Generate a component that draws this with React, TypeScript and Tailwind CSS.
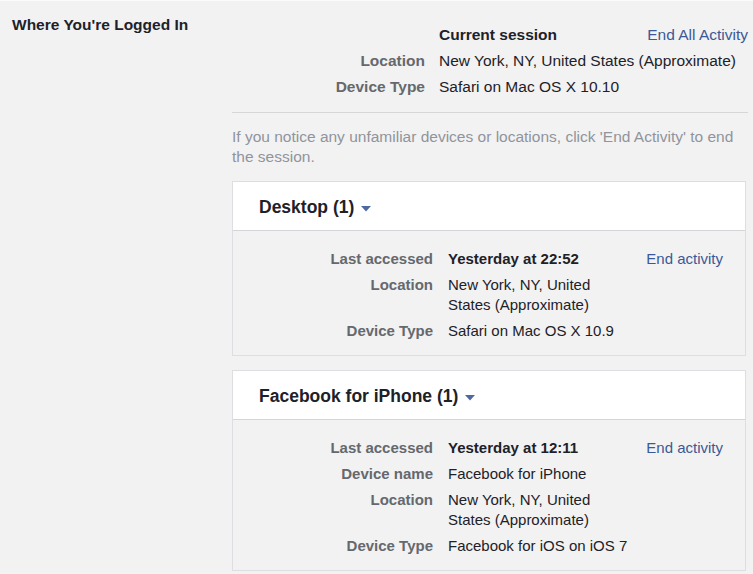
import type { ReactNode } from 'react'

type Row = { label: string; value: ReactNode; strong?: boolean }

function Caret() {
  return (
    <svg width="10" height="6" viewBox="0 0 10 6" className="ml-[7px] mt-[3px]">
      <path d="M0 0h10L5 5.5z" fill="#4e69a2" />
    </svg>
  )
}

function SessionCard({ title, rows }: { title: string; rows: Row[] }) {
  return (
    <div className="w-[514px] border border-[#dcdee1] bg-[#f2f2f2]">
      {/* header */}
      <div className="flex h-[49px] items-center border-b border-[#d3d5d8] bg-white pl-[26px] pt-[2px]">
        <span className="text-[17.5px] font-bold text-[#1d2129]">{title}</span>
        <Caret />
      </div>
      {/* body */}
      <div className="grid grid-cols-[200px_180px_1fr] gap-x-[15px] gap-y-[6px] pt-[18px] pb-[14px] pr-[22px] text-[15px] leading-[20px]">
        {rows.map((r, i) => (
          <div key={r.label} className="contents">
            <div className="text-right font-bold text-[#65686d]">{r.label}</div>
            <div className={r.strong ? 'font-bold text-[#1d2129]' : 'text-[#1d2129]'}>{r.value}</div>
            <div className="whitespace-nowrap text-right text-[#3b5998]">{i === 0 ? 'End activity' : ''}</div>
          </div>
        ))}
      </div>
    </div>
  )
}

export default function App() {
  return (
    <div
      className="flex h-[574px] w-[753px] overflow-hidden border-t border-[#fbfbfb] bg-[#f2f2f2] text-[15.5px]"
      style={{ fontFamily: '"Liberation Sans", Arial, sans-serif' }}
    >
      {/* left label column */}
      <div className="w-[232px] shrink-0 pl-[12px] pt-[14px] leading-[20px]">
        <span className="font-bold text-[#1d2129]">Where You're Logged In</span>
      </div>

      {/* right content */}
      <div className="w-[516px] shrink-0 pt-[24px]">
        <div className="grid grid-cols-[193px_1fr_auto] gap-x-[14px] gap-y-[6px] leading-[20px]">
          <div />
          <div className="font-bold text-[#1d2129]">Current session</div>
          <div className="text-[#3b5998]">End All Activity</div>

          <div className="text-right font-bold text-[#65686d]">Location</div>
          <div className="col-span-2 text-[#1d2129]">New York, NY, United States (Approximate)</div>

          <div className="text-right font-bold text-[#65686d]">Device Type</div>
          <div className="col-span-2 text-[#1d2129]">Safari on Mac OS X 10.10</div>
        </div>

        <div className="mt-[15px] h-px bg-[#d6d6d6]" />

        <p className="mt-[14px] pr-[4px] leading-[20px] text-[#90949c]">
          If you notice any unfamiliar devices or locations, click 'End Activity' to end the session.
        </p>

        <div className="mt-[14px] flex flex-col gap-[14px]">
          <SessionCard
            title="Desktop (1)"
            rows={[
              { label: 'Last accessed', value: 'Yesterday at 22:52', strong: true },
              { label: 'Location', value: 'New York, NY, United States (Approximate)' },
              { label: 'Device Type', value: 'Safari on Mac OS X 10.9' },
            ]}
          />
          <SessionCard
            title="Facebook for iPhone (1)"
            rows={[
              { label: 'Last accessed', value: 'Yesterday at 12:11', strong: true },
              { label: 'Device name', value: 'Facebook for iPhone' },
              { label: 'Location', value: 'New York, NY, United States (Approximate)' },
              { label: 'Device Type', value: 'Facebook for iOS on iOS 7' },
            ]}
          />
        </div>
      </div>
    </div>
  )
}
